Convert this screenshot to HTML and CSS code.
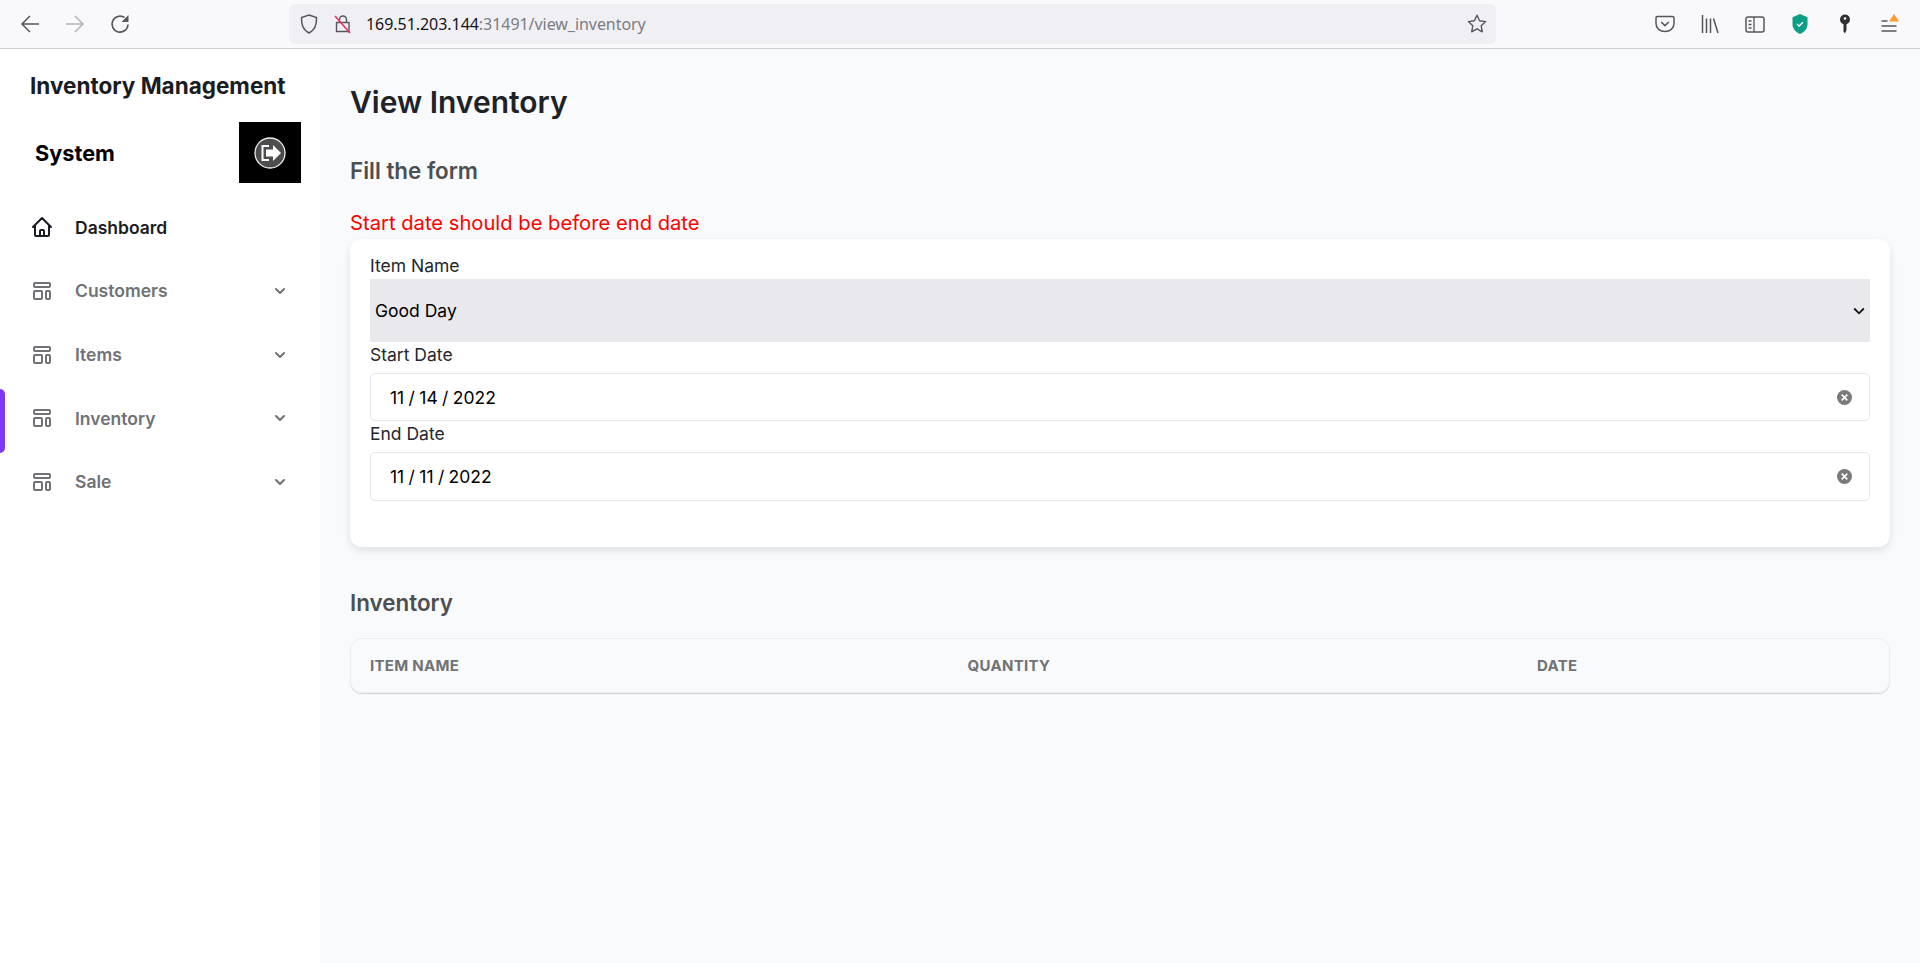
FILE: index.html
```html
<!DOCTYPE html>
<html lang="en">
<head>
<meta charset="utf-8">
<title>View Inventory</title>
<link rel="stylesheet" href="styles.css">
</head>
<body>
<header class="browser">
  <div class="nav-btns">
    <svg class="tb-icon" viewBox="0 0 20 20"><path d="M19 10H2M10 2L2 10l8 8" fill="none" stroke="#55555c" stroke-width="1.500"/></svg>
    <svg class="tb-icon" viewBox="0 0 20 20"><path d="M1 10h17M10 2l8 8-8 8" fill="none" stroke="#b4b4b8" stroke-width="1.500"/></svg>
    <svg class="tb-icon" viewBox="0 0 20 20"><path d="M18 10.500A8 8 0 1 1 14.500 3.500" fill="none" stroke="#55555c" stroke-width="1.600"/><path d="M18.500 1v7h-7z" fill="#55555c"/></svg>
  </div>
  <div class="urlbar">
    <svg class="shield" viewBox="0 0 18 20"><path d="M9 1l7.500 2.500c0 7-1 12-7.500 15.500C2.500 15.500 1.500 10.500 1.500 3.500z" fill="none" stroke="#55555c" stroke-width="1.500"/></svg>
    <svg class="lock" viewBox="0 0 18 20"><path d="M5.500 8V5.500a3.500 3.500 0 0 1 7 0V8M2.500 8.500h12.500v9H2.500z" fill="none" stroke="#55555c" stroke-width="1.400" stroke-linejoin="round"/><path d="M1 2l15 17" stroke="#e8305f" stroke-width="1.600"/></svg>
    <span class="url"><span class="host">169.51.203.144</span>:31491/view_inventory</span>
    <svg class="star" viewBox="0 0 20 20"><path d="M10 1.200l2.600 5.600 6 .8-4.400 4.200 1.100 6-5.300-3-5.300 3 1.100-6-4.400-4.200 6-.8z" fill="none" stroke="#55555c" stroke-width="1.400" stroke-linejoin="round"/></svg>
  </div>
  <div class="tools">
    <svg class="tb-icon" viewBox="0 0 20 20"><path d="M2.500 2.500h15q1.500 0 1.500 1.500v5.500c0 5-4 8-9 8s-9-3-9-8V4q0-1.500 1.500-1.500z" fill="none" stroke="#55555c" stroke-width="1.500"/><path d="M6.200 8l3.800 3.600L13.800 8" fill="none" stroke="#55555c" stroke-width="1.500"/></svg>
    <svg class="tb-icon" viewBox="0 0 20 20"><path d="M2.500 1v18M6.500 4.500V19M10.500 4.500V19M13.500 4.500l4.500 14.500" fill="none" stroke="#55555c" stroke-width="1.500"/></svg>
    <svg class="tb-icon" viewBox="0 0 20 20"><rect x="1" y="3" width="18" height="15" rx="2" fill="none" stroke="#55555c" stroke-width="1.500"/><path d="M9 3v15M3.500 7h3M3.500 10.500h3M3.500 14h3" fill="none" stroke="#55555c" stroke-width="1.300"/></svg>
    <svg class="tb-icon" viewBox="0 0 20 20"><path d="M10 0l7.500 3.200v7c0 4.500-3 7.500-7.500 9.800-4.500-2.300-7.500-5.300-7.500-9.800v-7z" fill="#0f9d83"/><path d="M7 10l2.200 2 3.800-3.800" fill="none" stroke="#fff" stroke-width="1.300"/></svg>
    <svg class="tb-icon" viewBox="0 0 20 20"><circle cx="10" cy="5.500" r="5" fill="#2f2f33"/><circle cx="10" cy="4.500" r="1.300" fill="#f9f9fb"/><path d="M8.500 9h3v7l-1.500 3.500-1.500-2z" fill="#2f2f33"/></svg>
    <svg class="tb-icon" viewBox="0 0 20 20"><path d="M1.500 7h6M1.500 12h15M1.500 17h15" fill="none" stroke="#55555c" stroke-width="1.500"/><path d="M14 0l5 7.500H9z" fill="#ff9a2e"/></svg>
  </div>
</header>

<div class="app">
  <aside class="sidebar">
    <div class="brand">
      <div class="brand-line">Inventory Management</div>
      <div class="brand-row">
        <span class="brand-system">System</span>
        <button class="logout" type="button" aria-label="Log out">
          <svg viewBox="0 0 32 32"><circle cx="16" cy="16" r="15" fill="#4d4d50" stroke="#f0f0f0" stroke-width="1.300"/><path d="M15 9h-6.500v14H15" fill="none" stroke="#fff" stroke-width="2"/><path d="M12 12.500h7V8l8 8-8 8v-4.500h-7z" fill="#fff"/></svg>
        </button>
      </div>
    </div>
    <nav class="menu">
      <a class="item item-home">
        <svg class="item-icon" viewBox="0 0 24 24"><path d="M3 12l2-2m0 0l7-7 7 7M5 10v10a1 1 0 001 1h3m10-11l2 2m-2-2v10a1 1 0 01-1 1h-3m-6 0a1 1 0 001-1v-4a1 1 0 011-1h2a1 1 0 011 1v4a1 1 0 001 1m-6 0h6" fill="none" stroke="currentColor" stroke-width="2" stroke-linejoin="round" stroke-linecap="round"/></svg>
        <span>Dashboard</span>
      </a>
      <a class="item">
        <svg class="item-icon" viewBox="0 0 24 24"><path d="M4 5a1 1 0 011-1h14a1 1 0 011 1v2a1 1 0 01-1 1H5a1 1 0 01-1-1V5zM4 13a1 1 0 011-1h6a1 1 0 011 1v6a1 1 0 01-1 1H5a1 1 0 01-1-1v-6zM16 13a1 1 0 011-1h2a1 1 0 011 1v6a1 1 0 01-1 1h-2a1 1 0 01-1-1v-6z" fill="none" stroke="currentColor" stroke-width="2" stroke-linejoin="round" stroke-linecap="round"/></svg>
        <span>Customers</span>
        <svg class="chev" viewBox="0 0 20 20"><path d="M5.293 7.293a1 1 0 011.414 0L10 10.586l3.293-3.293a1 1 0 111.414 1.414l-4 4a1 1 0 01-1.414 0l-4-4a1 1 0 010-1.414z" fill="currentColor"/></svg>
      </a>
      <a class="item">
        <svg class="item-icon" viewBox="0 0 24 24"><path d="M4 5a1 1 0 011-1h14a1 1 0 011 1v2a1 1 0 01-1 1H5a1 1 0 01-1-1V5zM4 13a1 1 0 011-1h6a1 1 0 011 1v6a1 1 0 01-1 1H5a1 1 0 01-1-1v-6zM16 13a1 1 0 011-1h2a1 1 0 011 1v6a1 1 0 01-1 1h-2a1 1 0 01-1-1v-6z" fill="none" stroke="currentColor" stroke-width="2" stroke-linejoin="round" stroke-linecap="round"/></svg>
        <span>Items</span>
        <svg class="chev" viewBox="0 0 20 20"><path d="M5.293 7.293a1 1 0 011.414 0L10 10.586l3.293-3.293a1 1 0 111.414 1.414l-4 4a1 1 0 01-1.414 0l-4-4a1 1 0 010-1.414z" fill="currentColor"/></svg>
      </a>
      <a class="item item-active">
        <svg class="item-icon" viewBox="0 0 24 24"><path d="M4 5a1 1 0 011-1h14a1 1 0 011 1v2a1 1 0 01-1 1H5a1 1 0 01-1-1V5zM4 13a1 1 0 011-1h6a1 1 0 011 1v6a1 1 0 01-1 1H5a1 1 0 01-1-1v-6zM16 13a1 1 0 011-1h2a1 1 0 011 1v6a1 1 0 01-1 1h-2a1 1 0 01-1-1v-6z" fill="none" stroke="currentColor" stroke-width="2" stroke-linejoin="round" stroke-linecap="round"/></svg>
        <span>Inventory</span>
        <svg class="chev" viewBox="0 0 20 20"><path d="M5.293 7.293a1 1 0 011.414 0L10 10.586l3.293-3.293a1 1 0 111.414 1.414l-4 4a1 1 0 01-1.414 0l-4-4a1 1 0 010-1.414z" fill="currentColor"/></svg>
      </a>
      <a class="item">
        <svg class="item-icon" viewBox="0 0 24 24"><path d="M4 5a1 1 0 011-1h14a1 1 0 011 1v2a1 1 0 01-1 1H5a1 1 0 01-1-1V5zM4 13a1 1 0 011-1h6a1 1 0 011 1v6a1 1 0 01-1 1H5a1 1 0 01-1-1v-6zM16 13a1 1 0 011-1h2a1 1 0 011 1v6a1 1 0 01-1 1h-2a1 1 0 01-1-1v-6z" fill="none" stroke="currentColor" stroke-width="2" stroke-linejoin="round" stroke-linecap="round"/></svg>
        <span>Sale</span>
        <svg class="chev" viewBox="0 0 20 20"><path d="M5.293 7.293a1 1 0 011.414 0L10 10.586l3.293-3.293a1 1 0 111.414 1.414l-4 4a1 1 0 01-1.414 0l-4-4a1 1 0 010-1.414z" fill="currentColor"/></svg>
      </a>
    </nav>
  </aside>

  <main class="content">
    <h1 class="page-title">View Inventory</h1>
    <h2 class="section-title">Fill the form</h2>
    <p class="error">Start date should be before end date</p>
    <form class="card">
      <label class="field-label">Item Name</label>
      <div class="select-wrap">
        <select class="select"><option>Good Day</option></select>
        <svg class="select-arrow" viewBox="0 0 12 12"><path d="M1.200 3.500L6 8.300l4.800-4.800" fill="none" stroke="#111" stroke-width="1.800"/></svg>
      </div>
      <label class="field-label date-label">Start Date</label>
      <div class="date">
        <input class="date-input" type="text" value="11 / 14 / 2022">
        <svg class="clear" viewBox="0 0 16 16"><circle cx="8" cy="8" r="8" fill="#7a7a7a"/><path d="M5 5l6 6M11 5l-6 6" stroke="#fff" stroke-width="1.800"/></svg>
      </div>
      <label class="field-label date-label">End Date</label>
      <div class="date date-end">
        <input class="date-input" type="text" value="11 / 11 / 2022">
        <svg class="clear" viewBox="0 0 16 16"><circle cx="8" cy="8" r="8" fill="#7a7a7a"/><path d="M5 5l6 6M11 5l-6 6" stroke="#fff" stroke-width="1.800"/></svg>
      </div>
    </form>
    <h2 class="section-title table-title">Inventory</h2>
    <div class="table-wrap">
      <table class="table">
        <thead>
          <tr><th class="col-name">Item Name</th><th class="col-qty">Quantity</th><th>Date</th></tr>
        </thead>
      </table>
    </div>
  </main>
</div>
</body>
</html>
```

FILE: styles.css
```css
* { box-sizing: border-box; }
html, body { height: 100%; }
body {
  margin: 0;
  display: flex;
  flex-direction: column;
  height: 963px;
  overflow: hidden;
  font-family: Inter, "Liberation Sans", sans-serif;
  background: #f9fafb;
  color: #1a1c23;
}

/* browser chrome */
.browser {
  height: 49px;
  flex: none;
  display: flex;
  align-items: center;
  background: #f9f9fb;
  border-bottom: 1px solid #cfcfd3;
  padding-right: 20px;
}
.tb-icon { width: 20px; height: 20px; display: block; }
.nav-btns {
  display: flex;
  gap: 25px;
  padding-left: 20px;
  width: 289px;
  flex: none;
}
.urlbar {
  width: 1207px;
  flex: none;
  height: 40px;
  margin-top: -1px;
  border-radius: 6px;
  background: #f0f0f4;
  display: flex;
  align-items: center;
  padding: 0 9px 0 11px;
}
.shield { width: 18px; height: 20px; flex: none; }
.lock { width: 18px; height: 20px; flex: none; margin-left: 16px; }
.url {
  margin-left: 14px;
  font-family: "Noto Sans", "Open Sans", sans-serif;
  font-size: 16px;
  letter-spacing: -.05px;
  color: #7b7b82;
  flex: 1;
}
.host { color: #15141a; }
.star { width: 20px; height: 20px; flex: none; }
.tools {
  margin-left: auto;
  display: flex;
  gap: 25px;
}

/* app layout */
.app { flex: 1; display: flex; min-height: 0; }
.sidebar {
  width: 320px;
  flex: none;
  background: #fff;
  padding-top: 22px;
}
.brand { padding: 0 19px 0 30px; }
.brand-line {
  font-size: 22.5px;
  font-weight: 700;
  line-height: 30px;
  color: #1a1c23;
  white-space: nowrap;
}
.brand-row {
  display: flex;
  align-items: center;
  justify-content: space-between;
  margin-top: 21px;
  padding-left: 5px;
}
.brand-system { font-size: 21.7px; font-weight: 700; color: #000; }
.logout {
  width: 62px;
  height: 61px;
  border: 0;
  padding: 0;
  background: #000;
  display: flex;
  align-items: center;
  justify-content: center;
}
.logout svg { width: 32px; height: 32px; }
.menu { display: flex; flex-direction: column; margin-top: 12.6px; }
.item {
  position: relative;
  display: flex;
  align-items: center;
  height: 63.6px;
  padding: 0 30px;
  font-size: 17.5px;
  font-weight: 600;
  color: #707275;
}
.item-home { color: #1a1c23; }
.item-icon { width: 24px; height: 24px; flex: none; margin-right: 21px; }
.item span { flex: 1; }
.chev { width: 20px; height: 20px; flex: none; }
.item-active::before {
  content: "";
  position: absolute;
  left: 0;
  top: 3px;
  bottom: -3px;
  width: 5px;
  background: #7e3af2;
  border-radius: 0 8px 8px 0;
}

/* content */
.content { flex: 1; padding: 31px 30px 0; min-width: 0; }
.page-title {
  margin: 0;
  font-size: 30px;
  line-height: 44px;
  font-weight: 600;
  color: #1f2328;
}
.section-title {
  margin: 0;
  font-size: 22.4px;
  line-height: 32px;
  font-weight: 600;
  color: #4c4f52;
}
.page-title + .section-title { margin-top: 31px; }
.error { margin: 24px 0 0; font-size: 20.2px; line-height: 24px; color: #f00; }
.card {
  margin-top: 4px;
  height: 308px;
  background: #fff;
  border-radius: 12px;
  padding: 14px 20px 0;
  box-shadow: 0 4px 8px rgba(0,0,0,.1);
}
.field-label {
  display: block;
  font-size: 17.5px;
  line-height: 26px;
  color: #24262d;
}
.date-label { margin-bottom: 5px; }
.select-wrap {
  height: 63px;
  display: flex;
  align-items: center;
  background: #e9e8ec;
  padding: 0 5px;
}
.select {
  flex: 1;
  appearance: none;
  border: 0;
  background: transparent;
  padding: 0;
  font: 400 17.5px Inter, sans-serif;
  color: #000;
}
.select-arrow { width: 12px; height: 12px; flex: none; margin-right: 0; }
.date {
  height: 48px;
  display: flex;
  align-items: center;
  background: #fff;
  border: 1px solid #e2e8f0;
  border-radius: 5px;
  padding: 0 17px 0 19px;
}
.date-end { height: 49px; }
.date-input {
  flex: 1;
  border: 0;
  outline: 0;
  padding: 0;
  font: 400 17.5px Inter, sans-serif;
  word-spacing: -.55px;
  color: #000;
  background: transparent;
}
.clear { width: 15px; height: 15px; flex: none; }
.table-title { margin-top: 40px; }
.table-wrap {
  margin-top: 19px;
  border: 1px solid #eceef1;
  border-radius: 12px;
  box-shadow: 0 1px 1px rgba(0,0,0,.16);
  overflow: hidden;
}
.table { width: 100%; border-collapse: collapse; table-layout: fixed; }
.table th {
  height: 53px;
  text-align: left;
  padding: 0 0 0 19px;
  font-size: 15px;
  font-weight: 700;
  letter-spacing: .3px;
  text-transform: uppercase;
  color: #707275;
}
.col-name { width: 597.5px; }
.col-qty { width: 569.5px; }
```
